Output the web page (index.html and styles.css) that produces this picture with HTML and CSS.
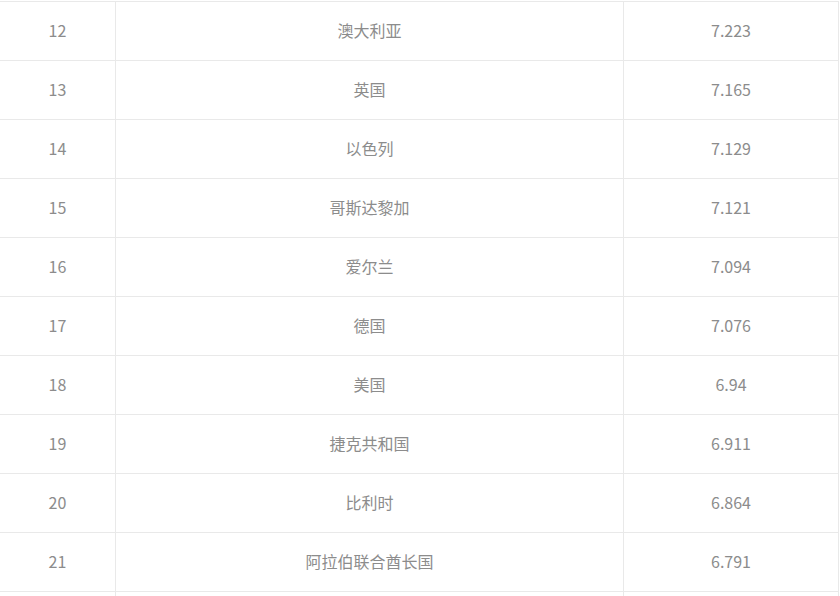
FILE: index.html
```html
<!DOCTYPE html>
<html lang="zh">
<head>
<meta charset="utf-8">
<link rel="stylesheet" href="styles.css">
</head>
<body>
<div class="wrap">
<table class="rank">
<tbody>
<tr><td class="c1">12</td><td class="c2">澳大利亚</td><td class="c3">7.223</td></tr>
<tr><td class="c1">13</td><td class="c2">英国</td><td class="c3">7.165</td></tr>
<tr><td class="c1">14</td><td class="c2">以色列</td><td class="c3">7.129</td></tr>
<tr><td class="c1">15</td><td class="c2">哥斯达黎加</td><td class="c3">7.121</td></tr>
<tr><td class="c1">16</td><td class="c2">爱尔兰</td><td class="c3">7.094</td></tr>
<tr><td class="c1">17</td><td class="c2">德国</td><td class="c3">7.076</td></tr>
<tr><td class="c1">18</td><td class="c2">美国</td><td class="c3">6.94</td></tr>
<tr><td class="c1">19</td><td class="c2">捷克共和国</td><td class="c3">6.911</td></tr>
<tr><td class="c1">20</td><td class="c2">比利时</td><td class="c3">6.864</td></tr>
<tr><td class="c1">21</td><td class="c2">阿拉伯联合酋长国</td><td class="c3">6.791</td></tr>
<tr class="tail"><td class="c1"></td><td class="c2"></td><td class="c3"></td></tr>
</tbody>
</table>
</div>
</body>
</html>
```
FILE: styles.css
```css
html, body {
  margin: 0;
  padding: 0;
  background: #ffffff;
  overflow: hidden;
}
.wrap {
  margin-left: -1px;
  padding-top: 1px;
  width: 841px;
}
.rank {
  border-collapse: collapse;
  width: 840px;
  table-layout: fixed;
  font-family: "Noto Sans CJK SC", "Noto Sans", sans-serif;
  font-size: 16px;
  color: #8c8c8c;
}
.rank td {
  border: 1px solid #e9e9e9;
  height: 56px;
  padding: 0 0 2px 0;
  text-align: center;
  vertical-align: middle;
}
.rank .c1 { width: 115px; }
.rank .c2 { width: 507px; }
.rank .c3 { width: 214px; }
```
